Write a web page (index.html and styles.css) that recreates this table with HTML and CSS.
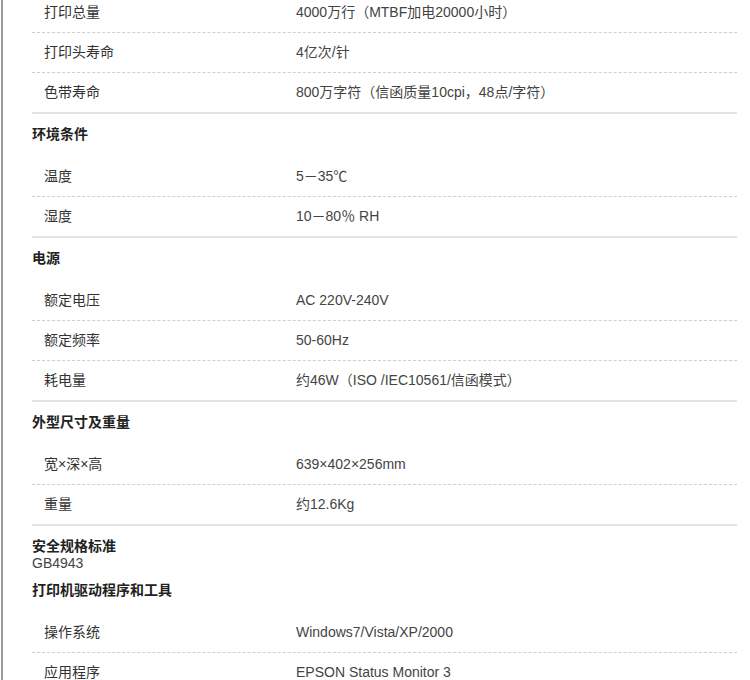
FILE: index.html
```html
<!DOCTYPE html>
<html lang="zh-CN">
<head>
<meta charset="UTF-8">
<meta name="viewport" content="width=device-width, initial-scale=1.0">
<title>打印机规格参数</title>
<link rel="stylesheet" href="styles.css">
</head>
<body>
<div class="spec-page">
  <div class="spec-group">
    <div class="spec-row"><span class="spec-label">打印总量</span><span class="spec-value">4000万行（MTBF加电20000小时）</span></div>
    <div class="spec-row"><span class="spec-label">打印头寿命</span><span class="spec-value">4亿次/针</span></div>
    <div class="spec-row"><span class="spec-label">色带寿命</span><span class="spec-value">800万字符（信函质量10cpi，48点/字符）</span></div>
  </div>

  <h3 class="section-title">环境条件</h3>
  <div class="spec-group">
    <div class="spec-row"><span class="spec-label">温度</span><span class="spec-value">5－35℃</span></div>
    <div class="spec-row"><span class="spec-label">湿度</span><span class="spec-value">10－80％ RH</span></div>
  </div>

  <h3 class="section-title">电源</h3>
  <div class="spec-group">
    <div class="spec-row"><span class="spec-label">额定电压</span><span class="spec-value">AC 220V-240V</span></div>
    <div class="spec-row"><span class="spec-label">额定频率</span><span class="spec-value">50-60Hz</span></div>
    <div class="spec-row"><span class="spec-label">耗电量</span><span class="spec-value">约46W（ISO /IEC10561/信函模式）</span></div>
  </div>

  <h3 class="section-title">外型尺寸及重量</h3>
  <div class="spec-group">
    <div class="spec-row"><span class="spec-label">宽×深×高</span><span class="spec-value">639×402×256mm</span></div>
    <div class="spec-row"><span class="spec-label">重量</span><span class="spec-value">约12.6Kg</span></div>
  </div>

  <h3 class="section-title">安全规格标准</h3>
  <p class="section-note">GB4943</p>

  <h3 class="section-title">打印机驱动程序和工具</h3>
  <div class="spec-group">
    <div class="spec-row"><span class="spec-label">操作系统</span><span class="spec-value">Windows7/Vista/XP/2000</span></div>
    <div class="spec-row"><span class="spec-label">应用程序</span><span class="spec-value">EPSON Status Monitor 3</span></div>
  </div>
</div>
</body>
</html>
```

FILE: styles.css
```css
body {
  margin: 0;
  font-family: "Liberation Sans", "Noto Sans CJK SC", sans-serif;
  font-size: 14px;
  color: #333;
  background: #fff;
}

.spec-page {
  margin: -7px 0 0 1px;
  padding: 0 13px 0 29px;
  border-left: 2px solid #999;
}

.section-title {
  margin: 0;
  padding-top: 10px;
  font-size: 14px;
  line-height: 20px;
  font-weight: bold;
  color: #222;
}

.section-note {
  margin: 0;
  line-height: 14px;
  color: #444;
}

.spec-group {
  margin-top: 13px;
  border-bottom: 2px solid #e2e2e2;
}

.spec-group:first-child {
  margin-top: 0;
}

.spec-row {
  display: grid;
  grid-template-columns: 252px 1fr;
  padding: 9px 0 10px 12px;
  line-height: 20px;
}

.spec-row + .spec-row {
  border-top: 1px dashed #cfcfcf;
}

.spec-value {
  color: #444;
}
```
